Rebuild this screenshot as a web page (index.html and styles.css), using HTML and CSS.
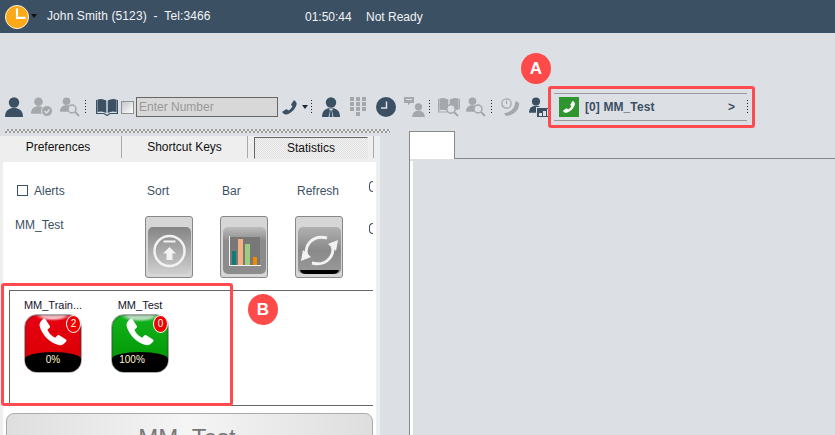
FILE: index.html
```html
<!DOCTYPE html>
<html lang="en">
<head>
  <meta charset="UTF-8">
  <meta name="viewport" content="width=device-width, initial-scale=1.0">
  <title>Agent Desktop</title>
  <link rel="stylesheet" href="styles.css">
</head>
<body>
  <svg class="defs" width="0" height="0">
    <defs>
      <symbol id="person" viewBox="0 0 18 20">
        <circle cx="9" cy="5.500" r="5.200"/>
        <path d="M0 20C0 13.500 4 11 9 11s9 2.500 9 9z"/>
      </symbol>
      <symbol id="handset" viewBox="0 0 24 24">
        <path d="M6.300 2.300 9.600 7.500c.3.500.2 1-.2 1.400L7.800 10.400c1.100 2.500 3.300 4.800 5.800 5.900l1.600-1.600c.4-.4 1-.5 1.500-.2l5 3.200c.5.300.6 1 .2 1.500-1.700 2.300-3.600 3.100-5.600 2.600C9.800 20.300 3.700 14.200 2 7.700 1.500 5.700 2.600 3.700 4.800 2.100c.5-.3 1.200-.2 1.500.2z"/>
      </symbol>
    </defs>
  </svg>

  <header class="topbar">
    <svg class="status-clock" width="24" height="24" viewBox="0 0 28 28">
      <circle cx="14" cy="14" r="13.500" fill="#fba919" stroke="#fff" stroke-width="1"/>
      <path d="M14 4v11h10" fill="none" stroke="#fff" stroke-width="2.500"/>
    </svg>
    <span class="caret caret-top m2"></span>
    <span class="agent-name">John Smith (5123)&nbsp; -&nbsp; Tel:3466</span>
    <span class="timer">01:50:44</span>
    <span class="state">Not Ready</span>
  </header>

  <div class="toolbar">
    <svg class="ic-dark" width="18" height="20"><use href="#person"/></svg>
    <svg class="ic-gray m8" width="22" height="20" viewBox="0 0 22 20">
      <use href="#person" width="15" height="17"/>
      <circle cx="16" cy="14" r="5.500" stroke="#dce0e4"/>
      <path d="M13.500 14l2 2 3-3.500" fill="none" stroke="#dce0e4" stroke-width="1.500"/>
    </svg>
    <svg class="ic-gray m7" width="20" height="20" viewBox="0 0 20 20">
      <use href="#person" width="13" height="15"/>
      <circle cx="12" cy="12" r="4" fill="#dce0e4" stroke="#a5a8ab" stroke-width="1.500"/>
      <path d="M15 15l4 4" stroke="#a5a8ab" stroke-width="2"/>
    </svg>
    <span class="dots m5"></span>
    <svg class="ic-dark m10" width="22" height="18" viewBox="0 0 22 18">
      <path d="M1.500 1.500Q6 0 10.300 2.500V15Q6 12.500 1.500 14z"/>
      <path d="M20.500 1.500Q16 0 11.700 2.500V15Q16 12.500 20.500 14z"/>
      <path d="M.6 2V15.500H8L11 17.500 14 15.500H21.400V2" fill="none" stroke="#3c5064" stroke-width="1.200"/>
    </svg>
    <span class="tool-check m3"></span>
    <input class="number-input m2" type="text" placeholder="Enter Number">
    <svg class="ic-dark flip m3" width="17" height="17"><use href="#handset"/></svg>
    <span class="caret m4"></span>
    <span class="dots m3"></span>
    <svg class="m10" width="18" height="20" viewBox="0 0 18 20">
      <circle cx="9" cy="5.500" r="5.200" fill="#3c5064"/>
      <path d="M0 20C0 13.500 4 11 9 11s9 2.500 9 9z" fill="#3c5064"/>
      <path d="M7 11.500h4L10 14l1.500 6h-5L8 14z" fill="#dce0e4"/>
      <path d="M8.500 13h1l1 7h-3z" fill="#3c5064"/>
    </svg>
    <svg class="ic-gray m10" width="16" height="20" viewBox="0 0 16 20">
      <path d="M0 0h4v4H0zM6 0h4v4H6zM12 0h4v4h-4zM0 5h4v4H0zM6 5h4v4H6zM12 5h4v4h-4zM0 10h4v4H0zM6 10h4v4H6zM12 10h4v4h-4zM6 15h4v4H6z"/>
    </svg>
    <svg class="m10" width="20" height="20" viewBox="0 0 20 20">
      <circle cx="10" cy="10" r="10" fill="#3c5064"/>
      <path d="M10.500 4.500v6.500H5" fill="none" stroke="#dce0e4" stroke-width="1.500"/>
    </svg>
    <svg class="ic-gray m8" width="21" height="20" viewBox="0 0 21 20">
      <use href="#person" x="8" y="6" width="13" height="14"/>
      <path d="M0 0H10V6H6L4 8.500V6H0z"/>
      <path d="M2 2.500h6" stroke="#dce0e4"/>
    </svg>
    <span class="dots m4"></span>
    <svg class="ic-gray m8" width="22" height="20" viewBox="0 0 22 20">
      <path d="M1.500 1.500Q6 0 10.300 2.500V14Q6 12 1.500 13z"/>
      <path d="M20.500 1.500Q16 0 11.700 2.500V14Q16 12 20.500 13z"/>
      <path d="M.6 2V15H9M21.400 2V12" fill="none" stroke="#a5a8ab" stroke-width="1.200"/>
      <circle cx="13" cy="12" r="4.200" fill="#dce0e4" stroke="#a5a8ab" stroke-width="1.500"/>
      <path d="M16 15l4 4" stroke="#a5a8ab" stroke-width="2"/>
    </svg>
    <svg class="ic-gray m6" width="20" height="20" viewBox="0 0 20 20">
      <use href="#person" width="13" height="15"/>
      <circle cx="12" cy="12" r="4" fill="#dce0e4" stroke="#a5a8ab" stroke-width="1.500"/>
      <path d="M15 15l4 4" stroke="#a5a8ab" stroke-width="2"/>
    </svg>
    <span class="dots m5"></span>
    <svg class="m9" width="19" height="20" viewBox="0 0 19 20">
      <circle cx="5.500" cy="6.500" r="4.700" fill="none" stroke="#a5a8ab" stroke-width="1.300"/>
      <path d="M5.500 3.500v3.500" stroke="#a5a8ab" stroke-width="1.200"/>
      <path d="M15 4 18 6C19 13 12 19 5 19L3 16C9 16 14 11 14 6z" fill="#a5a8ab"/>
    </svg>
    <svg class="m9" width="22" height="21" viewBox="0 0 22 21">
      <use href="#person" fill="#3c5064" width="14" height="16"/>
      <rect x="7.500" y="10.500" width="14.500" height="10" fill="#3c5064" stroke="#dce0e4"/>
      <path d="M10 16h3v3h-3zM14 14h3v5h-3zM18 12h3v7h-3z" fill="#dce0e4"/>
    </svg>
    <div class="queue m3">
      <span class="queue-icon">
        <svg class="flip" width="14" height="14" fill="#fff"><use href="#handset"/></svg>
      </span>
      <span class="queue-name">[0] MM_Test</span>
      <span class="queue-more">&gt;</span>
    </div>
    <span class="dots"></span>
  </div>

  <main class="workspace">
    <section class="left-panel">
      <div class="grip"></div>
      <nav class="tabs">
        <span class="tab tab-first">Preferences</span>
        <span class="tab">Shortcut Keys</span>
        <span class="tab tab-active"><span>Statistics</span></span>
      </nav>
      <div class="panel-body">
        <div class="options">
          <label class="opt-alerts"><span class="box"></span>Alerts</label>
          <span class="opt-head">Sort</span>
          <span class="opt-head">Bar</span>
          <span class="opt-head">Refresh</span>
          <span class="cut-radio"></span>

          <span class="opt-name">MM_Test</span>
          <button class="pic-btn">
            <svg width="43" height="47" viewBox="0 0 43 47">
              <defs>
                <linearGradient id="g-sort" x1="0" y1="0" x2="0" y2="1">
                  <stop offset="0" stop-color="#858585"/><stop offset="1" stop-color="#cfcfcf"/>
                </linearGradient>
              </defs>
              <rect width="43" height="47" rx="5" fill="url(#g-sort)"/>
              <circle cx="21.500" cy="24" r="15" fill="none" stroke="#f2f2f2" stroke-width="2.500"/>
              <path d="M15.500 14.500h12" stroke="#f2f2f2" stroke-width="2"/>
              <path d="M21.500 20l6.500 6.500h-3.500V33h-6v-6.500H15z" fill="#f2f2f2"/>
            </svg>
          </button>
          <button class="pic-btn">
            <svg width="43" height="47" viewBox="0 0 43 47">
              <defs>
                <linearGradient id="g-bar" x1="0" y1="0" x2="0" y2="1">
                  <stop offset="0" stop-color="#bdbdbd"/><stop offset=".3" stop-color="#8c8c8c"/><stop offset="1" stop-color="#8c8c8c"/>
                </linearGradient>
              </defs>
              <rect width="43" height="47" rx="5" fill="url(#g-bar)"/>
              <rect x="6" y="10" width="31" height="28" fill="#777"/>
              <path d="M6.500 9V38.500H38" fill="none" stroke="#f4f4f4"/>
              <path d="M9 24h4v14H9z" fill="#0c7d78"/>
              <path d="M15 12h5v26h-5z" fill="#f4b183"/>
              <path d="M22 17h5v21h-5z" fill="#9ccc7c"/>
              <path d="M30 30h4v8h-4z" fill="#f08a00"/>
            </svg>
          </button>
          <button class="pic-btn">
            <svg width="43" height="47" viewBox="0 0 43 47">
              <defs>
                <linearGradient id="g-ref" x1="0" y1="0" x2="0" y2="1">
                  <stop offset="0" stop-color="#b0b0b0"/><stop offset=".5" stop-color="#8a8a8a"/><stop offset="1" stop-color="#9a9a9a"/>
                </linearGradient>
              </defs>
              <rect width="43" height="47" rx="5" fill="url(#g-ref)"/>
              <path d="M10 31C4 20 14 7 29 11" fill="none" stroke="#f2f2f2" stroke-width="3"/>
              <path d="M33 16C39 27 29 40 14 36" fill="none" stroke="#f2f2f2" stroke-width="3"/>
              <path d="M30 17l10-4-2 11z" fill="#f2f2f2"/>
              <path d="M13 30L3 34l2-11z" fill="#f2f2f2"/>
              <path d="M2 43H41Q40 47 35 47H8Q3 47 2 43z"/>
            </svg>
          </button>
          <span class="cut-radio cut-radio-low"></span>
        </div>

        <div class="queues">
          <div class="queue-stat">
            <span class="stat-label">MM_Train...</span>
            <div class="tile tile-red">
              <svg class="tile-phone" width="32" height="32" fill="#fff"><use href="#handset"/></svg>
              <span class="tile-badge">2</span>
              <span class="tile-base">0%</span>
            </div>
          </div>
          <div class="queue-stat">
            <span class="stat-label">MM_Test</span>
            <div class="tile tile-green">
              <svg class="tile-phone" width="32" height="32" fill="#fff"><use href="#handset"/></svg>
              <span class="tile-badge">0</span>
              <span class="tile-base">100%</span>
            </div>
          </div>
        </div>

        <button class="big-btn">MM_Test</button>
      </div>
    </section>

    <section class="right-panel">
      <div class="page-tab"></div>
      <div class="page-body"></div>
    </section>
  </main>

  <!-- callouts drawn over the screenshot -->
  <div class="mark mark-a"></div>
  <div class="mark mark-b"></div>
  <span class="pin pin-a">A</span>
  <span class="pin pin-b">B</span>
</body>
</html>
```

FILE: styles.css
```css
html, body {
  height: 100%;
}

body {
  margin: 0;
  width: 835px;
  height: 435px;
  overflow: hidden;
  position: relative;
  background-color: #dce0e4;
  font-family: "Liberation Sans", Arial, sans-serif;
  font-size: 12px;
  color: #3c5064;
}

.defs {
  position: absolute;
}

.flip {
  transform: scaleX(-1);
}

.topbar {
  height: 33px;
  background-color: #3c5064;
  color: #f2f4f6;
  display: flex;
  align-items: center;
  padding-left: 5px;
}

.status-clock {
  flex: none;
}

.caret {
  width: 0;
  height: 0;
  border-left: 3px solid transparent;
  border-right: 3px solid transparent;
  border-top: 4px solid #1d2c3b;
}

.caret-top {
  margin-top: -1px;
  border-top-color: #111;
}

.agent-name {
  margin-left: 10px;
  margin-top: -1px;
  width: 258px;
  letter-spacing: .1px;
}

.timer {
  width: 61px;
}

.toolbar {
  margin-top: 60px;
  height: 28px;
  padding-left: 5px;
  display: flex;
  align-items: center;
}

.ic-dark {
  fill: #3c5064;
}

.ic-gray {
  fill: #a5a8ab;
}

.m2 { margin-left: 2px; }
.m3 { margin-left: 3px; }
.m4 { margin-left: 4px; }
.m5 { margin-left: 5px; }
.m6 { margin-left: 6px; }
.m7 { margin-left: 7px; }
.m8 { margin-left: 8px; }
.m9 { margin-left: 9px; }
.m10 { margin-left: 10px; }

.dots {
  width: 1px;
  height: 15px;
  flex: none;
  background: repeating-linear-gradient(#222 0 1px, transparent 1px 3px);
}

.tool-check {
  width: 11px;
  height: 11px;
  flex: none;
  border: 1px solid #8f9397;
  background: linear-gradient(135deg, #c4c6c8, #fff);
}

.number-input {
  width: 142px;
  height: 20px;
  box-sizing: border-box;
  flex: none;
  padding: 0 2px;
  border: 1px solid #666;
  background-color: #d8d8d8;
  font-family: "Liberation Sans", Arial, sans-serif;
  font-size: 12px;
}

.number-input::placeholder {
  color: #999;
  opacity: 1;
}

.queue {
  width: 193px;
  height: 28px;
  box-sizing: border-box;
  flex: none;
  border-top: 1px solid #999;
  border-bottom: 1px solid #999;
  padding: 0 12px 0 5px;
  display: flex;
  align-items: center;
  font-weight: bold;
}

.queue-icon {
  width: 20px;
  height: 20px;
  background-color: #2f952f;
  display: flex;
  align-items: center;
  justify-content: center;
}

.queue-name {
  margin-left: 6px;
  flex: 1;
  letter-spacing: .1px;
}

.workspace {
  display: flex;
  margin-top: 9px;
  height: 305px;
}

.left-panel {
  width: 380px;
  flex: none;
  position: relative;
}

.grip {
  width: 385px;
  margin: -1px 0 3px 5px;
  height: 4px;
  background: conic-gradient(#9a9a9a 25%, #e6e8ea 0 50%, #9a9a9a 0 75%, #e6e8ea 0) 0 0 / 4px 4px;
}

.tabs {
  height: 26px;
  background-color: #eeeeee;
  display: flex;
  color: #111;
}

.tab {
  height: 22px;
  box-sizing: border-box;
  border-right: 1px solid #aaa;
  display: flex;
  align-items: center;
  justify-content: center;
  width: 126px;
  font-size: 12px;
}

.tab-first {
  width: 122px;
  padding-right: 5px;
}

.tab-active {
  padding: 0 5px 0 6px;
}

.tab-active span {
  flex: 1;
  height: 20px;
  line-height: 20px;
  margin-top: 2px;
  text-align: center;
  border: 1px solid #e8e8e8;
  border-top-color: #666;
  border-left-color: #666;
  background: repeating-conic-gradient(#dedede 0 25%, #f4f4f4 0 50%) 0 0 / 2px 2px;
}

.panel-body {
  height: 273px;
  background-color: #fff;
  margin: 0 0 0 3px;
  width: 373px;
  box-shadow: 4px 0 0 #eeeeee, -3px 0 0 #eeeeee;
  overflow: hidden;
}

.options {
  height: 128px;
  box-sizing: border-box;
  padding: 21px 0 0 12px;
  display: grid;
  grid-template-columns: 130px 75px 75px 75px 1fr;
  grid-template-rows: 15px 62px;
  row-gap: 20px;
  align-items: center;
}

.opt-alerts {
  display: flex;
  align-items: center;
  padding-left: 2px;
}

.opt-head {
  padding-left: 2px;
}

.box {
  width: 9px;
  height: 9px;
  margin-right: 6px;
  border: 1px solid #3c5064;
}

.opt-name {
  align-self: start;
}

.cut-radio {
  width: 4px;
  height: 11px;
  margin: -2px 0 0 -1px;
  border: 1px solid #3c5064;
  border-right: none;
  border-radius: 6px 0 0 6px;
  box-sizing: border-box;
  align-self: start;
}

.cut-radio-low {
  margin-top: 5px;
}

.pic-btn {
  width: 48px;
  height: 62px;
  box-sizing: border-box;
  padding: 6px 0 0 2px;
  display: block;
  border: 1px solid #888;
  border-radius: 3px;
  background-color: #d6d6d6;
  margin-top: -4px;
}

.pic-btn svg {
  display: block;
}

.queues {
  height: 114px;
  margin: 0 3px 0 6px;
  border-top: 1px solid #666;
  border-bottom: 1px solid #666;
  border-left: 1px solid #666;
  display: flex;
  padding-left: 14px;
  gap: 29px;
}

.queue-stat {
  width: 58px;
  display: flex;
  flex-direction: column;
  align-items: center;
  padding-top: 8px;
}

.stat-label {
  height: 15px;
  white-space: nowrap;
  font-size: 11px;
  color: #14142a;
}

.tile {
  width: 58px;
  height: 59px;
  flex: none;
  box-sizing: border-box;
  border: 1px solid #aaa;
  border-radius: 13px;
  position: relative;
  box-shadow: inset 0 0 2px #333;
}

.tile-red {
  background:
    radial-gradient(ellipse 18px 6px at 50% 0, #f4b8c0 60%, transparent 100%),
    linear-gradient(#e60012, #d90000);
}

.tile-green {
  background:
    radial-gradient(ellipse 20px 7px at 50% 0, #b4dcbc 60%, transparent 100%),
    linear-gradient(#12b41e, #009000);
}

.tile-phone {
  position: absolute;
  left: 12px;
  top: 1px;
}

.tile-badge {
  position: absolute;
  right: 0;
  top: 0;
  width: 13px;
  height: 16px;
  border: 1px solid #fff;
  border-radius: 50%;
  background-color: #f00000;
  color: #fff;
  font-size: 10px;
  line-height: 15px;
  text-align: center;
}

.tile-base {
  position: absolute;
  left: 0;
  right: 0;
  bottom: 0;
  height: 20px;
  box-sizing: border-box;
  padding-top: 2px;
  background-color: #000;
  border-radius: 50% 50% 12px 12px / 7px 7px 12px 12px;
  color: #fdf5d0;
  font-size: 10px;
  text-align: center;
}

.tile-green .tile-base {
  padding-right: 16px;
}

.big-btn {
  display: block;
  width: 367px;
  height: 50px;
  box-sizing: border-box;
  margin: 7px 0 0 3px;
  padding: 0 5px 0 0;
  border: 1px solid #aaa;
  border-radius: 8px;
  background: linear-gradient(90deg, #dedede, #f5f5f5 50%, #dedede);
  font-family: "Liberation Sans", Arial, sans-serif;
  font-size: 24px;
  color: #777;
}

.right-panel {
  margin-left: 29px;
  flex: 1;
  display: flex;
  flex-direction: column;
}

.page-tab {
  width: 46px;
  height: 28px;
  box-sizing: border-box;
  flex: none;
  margin: 1px 0 -1px;
  background-color: #fff;
  border: 1px solid #888;
  border-bottom: none;
  position: relative;
  z-index: 1;
}

.page-body {
  flex: 1;
  border-top: 1px solid #888;
  border-left: 1px solid #888;
  padding-left: 3px;
  background: linear-gradient(#dce0e4, #dce0e4) 3px 2px no-repeat #fff;
  box-shadow: inset 0 2px 0 #dce0e4;
}

/* callouts */
.mark {
  position: absolute;
  border: 3px solid #ff4a4f;
  border-radius: 3px;
  box-sizing: border-box;
}

.mark-a {
  left: 548px;
  top: 86px;
  width: 207px;
  height: 42px;
}

.mark-b {
  left: 1px;
  top: 283px;
  width: 232px;
  height: 123px;
}

.pin {
  position: absolute;
  width: 30px;
  height: 31px;
  border-radius: 50%;
  background-color: #ff4a4a;
  color: #fff;
  font-weight: bold;
  font-size: 17px;
  line-height: 31px;
  text-align: center;
}

.pin-a {
  left: 521px;
  top: 53px;
}

.pin-b {
  left: 248px;
  top: 294px;
}
```
